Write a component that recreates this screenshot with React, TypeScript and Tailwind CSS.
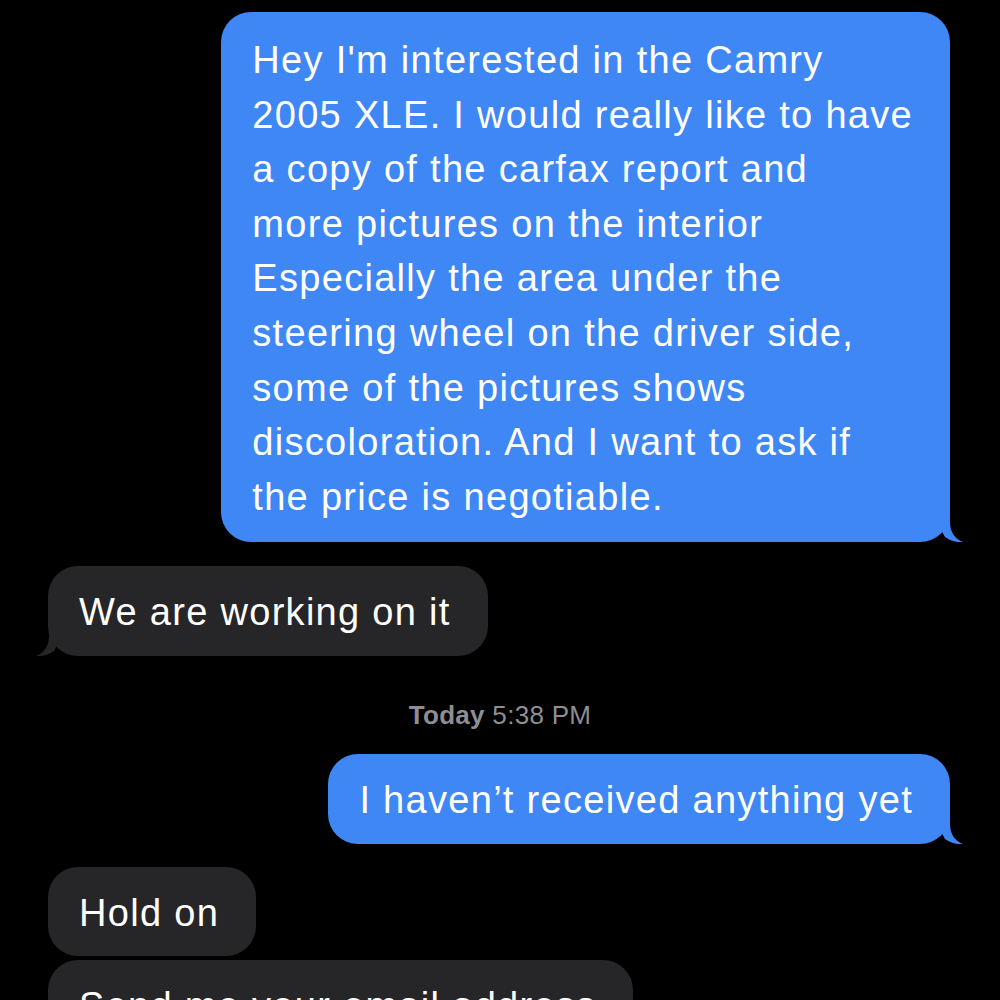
import React from "react";

const BLUE = "#3f87f5";
const GRAY = "#262628";

const TailRight: React.FC<{ color: string }> = ({ color }) => (
  <svg
    className="absolute bottom-0 right-[-13px]"
    width="40"
    height="40"
    viewBox="0 0 40 40"
  >
    <path
      d="M27,0 L27,20 C27,30 32,37 40,40 C34,40.6 28,39 22,35 L14,20 Z"
      fill={color}
    />
  </svg>
);

const TailLeft: React.FC<{ color: string }> = ({ color }) => (
  <svg
    className="absolute bottom-0 left-[-12px]"
    width="40"
    height="40"
    viewBox="0 0 40 40"
  >
    <path
      d="M13,0 L13,20 C13,30 8,37 0,40 C6,40.6 12,39 18,35 L26,20 Z"
      fill={color}
    />
  </svg>
);

interface BubbleProps {
  lines: string[];
  sent?: boolean;
  tail?: boolean;
  className?: string;
}

const Bubble: React.FC<BubbleProps> = ({ lines, sent, tail = true, className = "" }) => {
  const color = sent ? BLUE : GRAY;
  return (
    <div
      className={`relative rounded-[30px] pl-[31px] pr-[37px] text-white text-[38px] leading-[54.6px] tracking-[1.3px] whitespace-nowrap ${className}`}
      style={{ backgroundColor: color }}
    >
      {lines.map((l, i) => (
        <div key={i}>{l}</div>
      ))}
      {tail && (sent ? <TailRight color={color} /> : <TailLeft color={color} />)}
    </div>
  );
};

export default function App() {
  return (
    <div
      className="w-[1000px] h-[1000px] overflow-hidden bg-black flex flex-col pt-[12px]"
      style={{ fontFamily: "'Liberation Sans', Arial, sans-serif" }}
    >
      {/* first outgoing message */}
      <Bubble
        sent
        className="self-end mr-[50px] pt-[21px] pb-[18px]"
        lines={[
          "Hey I'm interested in the Camry",
          "2005 XLE. I would really like to have",
          "a copy of the carfax report and",
          "more pictures on the interior",
          "Especially the area under the",
          "steering wheel on the driver side,",
          "some of the pictures shows",
          "discoloration. And I want to ask if",
          "the price is negotiable.",
        ]}
      />

      <Bubble
        className="self-start ml-[48px] mt-[24px] pt-[19px] pb-[16px]"
        lines={["We are working on it"]}
      />

      {/* timestamp */}
      <div className="mt-[44px] mb-[24px] text-center text-[26px] leading-[30px] tracking-[0.3px] text-[#8e8e93]">
        <span className="font-bold">Today</span> 5:38 PM
      </div>

      <Bubble
        sent
        className="self-end mr-[50px] pt-[19px] pb-[16px]"
        lines={["I haven’t received anything yet"]}
      />

      <Bubble
        tail={false}
        className="self-start ml-[48px] mt-[23px] pt-[19px] pb-[16px]"
        lines={["Hold on"]}
      />

      <Bubble
        className="self-start ml-[48px] mt-[4px] pt-[19px] pb-[16px]"
        lines={["Send me your email address"]}
      />
    </div>
  );
}
